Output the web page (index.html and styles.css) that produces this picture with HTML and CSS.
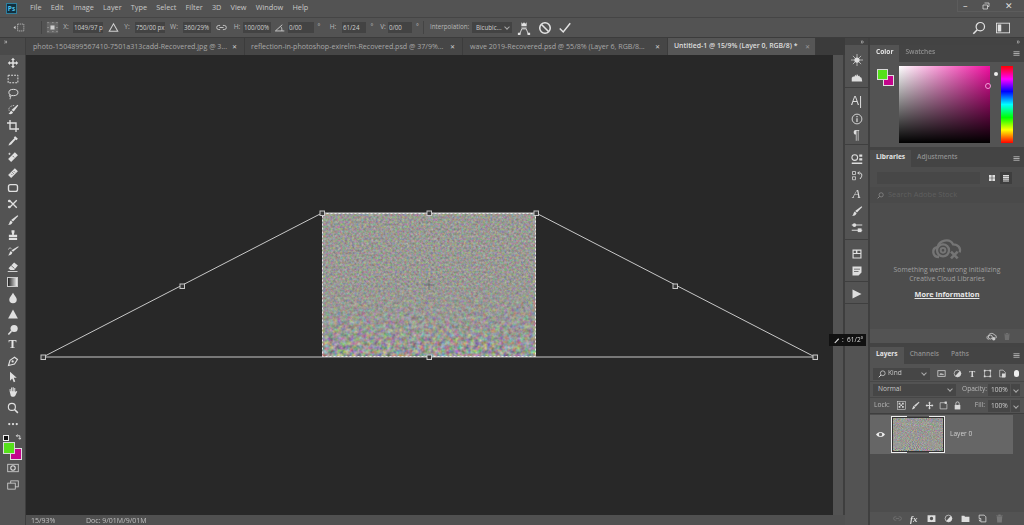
FILE: index.html
```html
<!DOCTYPE html>
<html lang="en">
<head>
<meta charset="utf-8">
<title>Photoshop</title>
<link rel="stylesheet" href="styles.css">
</head>
<body>
<svg class="defs" aria-hidden="true">
  <symbol id="move" viewBox="0 0 16 16"><path d="M8 1l2.600 3H9v3h3V5.400L15 8l-3 2.600V9H9v3h1.600L8 15l-2.600-3H7V9H4v1.600L1 8l3-2.600V7h3V4H5.400z"/></symbol>
  <symbol id="marquee" viewBox="0 0 16 16"><rect x="1.500" y="3" width="13" height="10" fill="none" stroke="currentColor" stroke-width="1.300" stroke-dasharray="2.500 1.500"/></symbol>
  <symbol id="lasso" viewBox="0 0 16 16"><ellipse cx="8.500" cy="6" rx="6" ry="4.200" fill="none" stroke="currentColor" stroke-width="1.300"/><path d="M4 9c-2 2 0 3 1 2s-1 2-1 4" fill="none" stroke="currentColor" stroke-width="1.200"/></symbol>
  <symbol id="quick" viewBox="0 0 16 16"><path d="M14 1l1 1-6 8-3-2z"/><path d="M5.500 9l2.500 2c-1 3-4 3-6 2 2-1 2-3 3.500-4z"/><path d="M3 9C1 5 5 2 10 2" fill="none" stroke="currentColor" stroke-dasharray="1.500 1"/></symbol>
  <symbol id="crop" viewBox="0 0 16 16"><path d="M4 0v12h12M0 4h12v12" fill="none" stroke="currentColor" stroke-width="1.800"/></symbol>
  <symbol id="dropper" viewBox="0 0 16 16"><path d="M11 1.500l3.500 3.500-2 2-1-1-6 6.500-3 1.500-.5-.5 1.500-3L10 4l-1-1z"/></symbol>
  <symbol id="heal" viewBox="0 0 16 16"><path d="M10.500 1.500l4 4-9 9-4-4z"/><path d="M7.500 6.500l2 2" stroke="#535353"/><path d="M1.800 3.800h3M3.300 2.300v3" stroke="currentColor"/></symbol>
  <symbol id="band" viewBox="0 0 16 16"><path d="M10.500 1.500l4 4-9 9-4-4z"/><path d="M7 7l2 2M9 5.500l1.500 1.500M5.500 9l1.500 1.500" stroke="#535353"/></symbol>
  <symbol id="patch" viewBox="0 0 16 16"><rect x="2" y="3.500" width="12" height="9" rx="2.500" fill="none" stroke="currentColor" stroke-width="1.800"/></symbol>
  <symbol id="scis" viewBox="0 0 16 16"><path d="M3 3l10 10M13 3L3 13" stroke="currentColor" stroke-width="1.800"/><circle cx="3" cy="4" r="1.800"/><circle cx="3" cy="12" r="1.800"/></symbol>
  <symbol id="brush" viewBox="0 0 16 16"><path d="M14 1.500l1 1-7 7.500-2.500-2z"/><path d="M5 8.500l2.500 2.500c-1 3-3.500 3.500-6 3.500 2-1.500 1.500-4.500 3.500-6z"/></symbol>
  <symbol id="stamp" viewBox="0 0 16 16"><path d="M6 1.500h4v2.500l-1 3.500h4.500V11h-11V7.500H7L6 4zM2.500 12h11v2.500h-11z"/></symbol>
  <symbol id="hist" viewBox="0 0 16 16"><path d="M15 1.500l.5 1-7.500 6.500-2-2z"/><path d="M5 8l2.200 2c-1 3-3 4-5.700 4 1.800-1.500 1.500-4 3.500-6z"/><path d="M2 6c1-3 3-2 4-1" fill="none" stroke="currentColor"/></symbol>
  <symbol id="eraser" viewBox="0 0 16 16"><path d="M9.500 2l5 4-5 6H4.500L2 9.500z"/><path d="M1 14h13" stroke="currentColor" stroke-width="1.200"/><path d="M5.500 6l4.500 4" stroke="#535353"/></symbol>
  <symbol id="drop" viewBox="0 0 16 16"><path d="M8 1c2 4 5 6 5 9a5 5 0 0 1-10 0c0-3 3-5 5-9z"/></symbol>
  <symbol id="tri" viewBox="0 0 16 16"><path d="M8 2l6.500 12h-13z"/></symbol>
  <symbol id="dodge" viewBox="0 0 16 16"><circle cx="9.500" cy="6" r="4.800"/><path d="M6 9.500L1.800 14" stroke="currentColor" stroke-width="2"/></symbol>
  <symbol id="pen" viewBox="0 0 16 16"><path d="M2 14l2-7 6-4 4 3-4 6z" fill="none" stroke="currentColor" stroke-width="1.500"/><circle cx="7.500" cy="8.500" r="1.500"/></symbol>
  <symbol id="arrow" viewBox="0 0 16 16"><path d="M4 1l9 8H9l2 5-2 1-2-5-3 3z"/></symbol>
  <symbol id="hand" viewBox="0 0 16 16"><path d="M3.500 7V4h1.300v3h.7V2h1.300v5h.7V1.500H9V7h.7V2.500H11V8l1.500-1.500 1.200.8L11 13c-1 1.800-5 2-6 0z"/></symbol>
  <symbol id="zoom" viewBox="0 0 16 16"><circle cx="6.500" cy="6.500" r="4.700" fill="none" stroke="currentColor" stroke-width="1.500"/><path d="M10 10l4.500 4.500" stroke="currentColor" stroke-width="2"/></symbol>
  <symbol id="dots" viewBox="0 0 16 16"><circle cx="3" cy="8" r="1.500"/><circle cx="8" cy="8" r="1.500"/><circle cx="13" cy="8" r="1.500"/></symbol>
  <symbol id="mask" viewBox="0 0 16 16"><rect x="1" y="3" width="14" height="10" fill="none" stroke="currentColor"/><circle cx="8" cy="8" r="3" fill="none" stroke="currentColor" stroke-width="1.400"/></symbol>
  <symbol id="screen" viewBox="0 0 16 16"><rect x="5" y="2.500" width="10" height="8" fill="none" stroke="currentColor"/><rect x="1" y="5.500" width="10" height="8" fill="#535353" stroke="currentColor"/></symbol>
  <symbol id="nav" viewBox="0 0 16 16"><circle cx="8" cy="8" r="3.500"/><path d="M8 0v16M0 8h16M2.500 2.500l11 11M13.500 2.500l-11 11" stroke="currentColor" stroke-width=".9"/></symbol>
  <symbol id="histo" viewBox="0 0 16 16"><path d="M1 14V9l2-2 1 1 2-3 1 2 1-3 2 3 1-1 1 2 2 1 1 5z"/></symbol>
  <symbol id="info" viewBox="0 0 16 16"><circle cx="8" cy="8" r="6.500" fill="none" stroke="currentColor" stroke-width="1.200"/><path d="M8 7v5M8 4v1.600" stroke="currentColor" stroke-width="1.600"/></symbol>
  <symbol id="group" viewBox="0 0 16 16"><circle cx="5" cy="6" r="3.800" fill="none" stroke="currentColor" stroke-width="1.400"/><path d="M11 2h4v3h-4zM11 7h4v3h-4zM1 12.500h14v2H1z"/></symbol>
  <symbol id="swap" viewBox="0 0 16 16"><path d="M2 2h4v4H2zM2 9h4v4H2z" fill="none" stroke="currentColor"/><path d="M9 4h3c2 0 3 2 2 5l-2 3M11 2L9 4l2 2" fill="none" stroke="currentColor" stroke-width="1.300"/></symbol>
  <symbol id="sliders" viewBox="0 0 16 16"><path d="M1 4h14M1 11h14" stroke="currentColor" stroke-width="1.300"/><circle cx="4.500" cy="4" r="2.500"/><rect x="9" y="8.500" width="5" height="5"/></symbol>
  <symbol id="panel1" viewBox="0 0 16 16"><path fill-rule="evenodd" d="M2 2h12v12H2zM3.500 8v4.500h9V8zM3.500 3.500V6.500h3v-3zM8.500 3.500V6.500h4v-3z"/></symbol>
  <symbol id="panel2" viewBox="0 0 16 16"><path fill-rule="evenodd" d="M2 2h12v8l-4 4H2zM4 5v1h8V5zM4 8v1h6V8z"/></symbol>
  <symbol id="play" viewBox="0 0 16 16"><path d="M2 2l12 6-12 6z"/></symbol>
  <symbol id="check" viewBox="0 0 16 16"><path d="M2 8.500l4 4 8-10" fill="none" stroke="currentColor" stroke-width="1.700"/></symbol>
  <symbol id="cancel" viewBox="0 0 16 16"><circle cx="8" cy="8" r="6" fill="none" stroke="currentColor" stroke-width="1.800"/><path d="M4 4l8 8" stroke="currentColor" stroke-width="1.800"/></symbol>
  <symbol id="warp" viewBox="0 0 16 16"><path d="M5 1.500l1.500 1.500L8 1.500 9.500 3 11 1.500V6H5z"/><path d="M5 8h6M3 15l2.500-6h5L13 15" fill="none" stroke="currentColor"/><path d="M1 13.500h3v2.500H1zM12 13.500h3v2.500h-3z"/></symbol>
  <symbol id="search" viewBox="0 0 16 16"><circle cx="9.500" cy="6.500" r="4.800" fill="none" stroke="currentColor" stroke-width="1.400"/><path d="M6 10l-4.500 4.500" stroke="currentColor" stroke-width="1.800"/></symbol>
  <symbol id="winicon" viewBox="0 0 16 16"><rect x=".5" y="2.500" width="15" height="11" fill="none" stroke="currentColor"/><path d="M2 4h4v8H2z"/></symbol>
  <symbol id="delta" viewBox="0 0 16 16"><path d="M8 2.500l6.200 11H1.800z" fill="none" stroke="currentColor" stroke-width="1.500"/></symbol>
  <symbol id="angle" viewBox="0 0 16 16"><path d="M15 13H2l10-9M10 7c1.500 1.500 1.500 4 1.500 6" fill="none" stroke="currentColor" stroke-width="1.300"/></symbol>
  <symbol id="link" viewBox="0 0 16 16"><path d="M6 5H4a3 3 0 0 0 0 6h2M10 5h2a3 3 0 0 1 0 6h-2M5 8h6" fill="none" stroke="currentColor" stroke-width="1.300"/></symbol>
  <symbol id="refpt" viewBox="0 0 16 16"><rect x="1" y="1" width="14" height="14" fill="#666"/><path d="M2 2h1M8 2h1M13 2h1M2 8h1M13 8h1M2 13h1M8 13h1M13 13h1" stroke="currentColor"/><rect x="5.500" y="5.500" width="5" height="5"/></symbol>
  <symbol id="transform" viewBox="0 0 16 16"><rect x="6" y="3" width="9" height="10" fill="none" stroke="currentColor" stroke-dasharray="2 1"/><path d="M0 8l3-2.500v5z"/></symbol>
  <symbol id="grid" viewBox="0 0 16 16"><path d="M2 2h5.300v5.300H2zM8.700 2H14v5.300H8.700zM2 8.700h5.300V14H2zM8.700 8.700H14V14H8.700z"/></symbol>
  <symbol id="list" viewBox="0 0 16 16"><path d="M2 2h12v2.400H2zM2 5.600h12V8H2zM2 9.200h12v2.400H2zM2 12.800h12V15H2z"/></symbol>
  <symbol id="menu" viewBox="0 0 16 16"><path d="M1 3h14v2H1zM1 7h14v2H1zM1 11h14v2H1z"/></symbol>
  <symbol id="trash" viewBox="0 0 16 16"><path d="M3 4h10l-1 11H4zM2 2.500h12V3.500H2zM6 1h4v1.500H6z"/></symbol>
  <symbol id="cloud" viewBox="0 0 48 32"><path d="M12 28C2 28 0 15 10 13 12 3 28-1 33 9c8 0 12 6 10 12" fill="none" stroke="currentColor" stroke-width="3.500"/><circle cx="18" cy="18" r="9" fill="none" stroke="currentColor" stroke-width="3.500"/><circle cx="18" cy="18" r="3.500" fill="none" stroke="currentColor" stroke-width="3"/><path d="M30 20l10 10M40 20L30 30" stroke="currentColor" stroke-width="4"/></symbol>
  <symbol id="cc" viewBox="0 0 18 16"><path d="M4 13C0 13 0 7 4 6c1-4 8-5 10-1 3 0 4 3 3 6" fill="none" stroke="currentColor" stroke-width="1.600"/><circle cx="7" cy="9" r="3.500" fill="none" stroke="currentColor" stroke-width="1.600"/><circle cx="13" cy="12" r="3"/></symbol>
  <symbol id="eye" viewBox="0 0 16 16"><path fill-rule="evenodd" d="M0 8c4-6 12-6 16 0-4 6-12 6-16 0zm8-3a3 3 0 1 0 0 6 3 3 0 0 0 0-6z"/></symbol>
  <symbol id="fimg" viewBox="0 0 16 16"><rect x="1.500" y="3" width="13" height="10" fill="none" stroke="currentColor" stroke-width="1.400"/><path d="M4 10l3-3 2 2 1.500-1 2 2z"/></symbol>
  <symbol id="half" viewBox="0 0 16 16"><circle cx="8" cy="8" r="6" fill="none" stroke="currentColor" stroke-width="1.200"/><path d="M12 3.500A6 6 0 0 1 4 12.500z"/></symbol>
  <symbol id="fshape" viewBox="0 0 16 16"><rect x="3" y="3" width="10" height="10" fill="none" stroke="currentColor" stroke-width="1.200"/><path d="M1.500 1.500h3v3h-3zM11.500 1.500h3v3h-3zM1.500 11.500h3v3h-3zM11.500 11.500h3v3h-3z"/></symbol>
  <symbol id="fsmart" viewBox="0 0 16 16"><path d="M3 2h6l4 4v8H3z" fill="none" stroke="currentColor" stroke-width="1.200"/><path d="M7 8h6v7H7z"/></symbol>
  <symbol id="checker" viewBox="0 0 16 16"><rect x="1" y="1" width="14" height="14" fill="none" stroke="currentColor"/><path d="M3 3h3v3H3zM9 3h3v3H9zM6 6h3v3H6zM3 9h3v3H3zM9 9h3v3H9z"/></symbol>
  <symbol id="lockpos" viewBox="0 0 16 16"><path d="M8 1l2.500 3H9v3h3V5.500L15 8l-3 2.500V9H9v3h1.500L8 15l-2.500-3H7V9H4v1.500L1 8l3-2.500V7h3V4H5.500z"/></symbol>
  <symbol id="lockart" viewBox="0 0 16 16"><path d="M2 3h9l3 3v8H2z" fill="none" stroke="currentColor" stroke-width="1.200"/><path d="M10 1h4v4h-4z"/></symbol>
  <symbol id="lock" viewBox="0 0 16 16"><path d="M3 7h10v8H3z"/><path d="M5 7V4.500a3 3 0 0 1 6 0V7" fill="none" stroke="currentColor" stroke-width="1.500"/></symbol>
  <symbol id="chain" viewBox="0 0 16 16"><path d="M6 5H4a3 3 0 0 0 0 6h2M10 5h2a3 3 0 0 1 0 6h-2M5 8h6" fill="none" stroke="currentColor" stroke-width="1.300"/></symbol>
  <symbol id="maskb" viewBox="0 0 16 16"><path fill-rule="evenodd" d="M1 2h14v12H1zM8 5a3 3 0 1 0 0 6 3 3 0 0 0 0-6z"/></symbol>
  <symbol id="folder" viewBox="0 0 16 16"><path d="M1 3h5l1 2h8v9H1z"/></symbol>
  <symbol id="newl" viewBox="0 0 16 16"><path d="M2 2h9l3 3v9H5V8H2z" fill="none" stroke="currentColor" stroke-width="1.400"/><path d="M1 10h3v4"/></symbol>
</svg>

<div class="app">
  <header class="menubar">
    <div class="logo">Ps</div>
    <nav class="menus">
      <span>File</span><span>Edit</span><span>Image</span><span>Layer</span><span>Type</span><span>Select</span><span>Filter</span><span>3D</span><span>View</span><span>Window</span><span>Help</span>
    </nav>
    <div class="winctl">
      <span class="winbtn">–</span>
      <svg class="winbtn-ic" viewBox="0 0 16 16"><path d="M5 2h9v7h-3M2 6h9v8H2z" fill="none" stroke="currentColor" stroke-width="1.500"/></svg>
      <span class="winbtn close">✕</span>
    </div>
  </header>

  <div class="options">
    <svg class="ic opt-tool"><use href="#transform"/></svg>
    <i class="vsep opt-sep1"></i>
    <svg class="ic opt-ref"><use href="#refpt"/></svg>
    <span class="lb w14">X:</span><span class="fld w30">1049/97 p</span>
    <svg class="ic opt-delta"><use href="#delta"/></svg>
    <span class="lb w16">Y:</span><span class="fld w30">750/00 px</span>
    <span class="lb w18">W:</span><span class="fld w28">360/29%</span>
    <span class="icbox w20"><svg class="ic"><use href="#link"/></svg></span>
    <span class="lb w12">H:</span><span class="fld w28">100/00%</span>
    <span class="icbox w17"><svg class="ic"><use href="#angle"/></svg></span>
    <span class="fld w26">0/00</span>
    <span class="lb w10">°</span>
    <span class="lb w18">H:</span><span class="fld w24">61/24</span>
    <span class="lb w12">°</span>
    <span class="lb w10">V:</span><span class="fld w24">0/00</span>
    <span class="lb w11">°</span>
    <i class="vsep"></i>
    <span class="lb interp">Interpolation:</span>
    <span class="fld sel w40">Bicubic...<b class="chev"></b></span>
    <svg class="ic big opt-warp"><use href="#warp"/></svg>
    <svg class="ic big opt-cancel"><use href="#cancel"/></svg>
    <svg class="ic big opt-check"><use href="#check"/></svg>
    <svg class="ic big opt-search"><use href="#search"/></svg>
    <svg class="ic big opt-win"><use href="#winicon"/></svg>
  </div>

  <div class="main">
    <aside class="tools">
      <div class="strip">»</div>
      <div class="toollist">
        <svg class="tool"><use href="#move"/></svg>
        <svg class="tool"><use href="#marquee"/></svg>
        <svg class="tool"><use href="#lasso"/></svg>
        <svg class="tool"><use href="#quick"/></svg>
        <svg class="tool"><use href="#crop"/></svg>
        <svg class="tool"><use href="#dropper"/></svg>
        <svg class="tool"><use href="#heal"/></svg>
        <svg class="tool"><use href="#band"/></svg>
        <svg class="tool"><use href="#patch"/></svg>
        <svg class="tool"><use href="#scis"/></svg>
        <svg class="tool"><use href="#brush"/></svg>
        <svg class="tool"><use href="#stamp"/></svg>
        <svg class="tool"><use href="#hist"/></svg>
        <svg class="tool"><use href="#eraser"/></svg>
        <div class="grad"></div>
        <svg class="tool"><use href="#drop"/></svg>
        <svg class="tool"><use href="#tri"/></svg>
        <svg class="tool"><use href="#dodge"/></svg>
        <div class="tooltext">T</div>
        <svg class="tool"><use href="#pen"/></svg>
        <svg class="tool"><use href="#arrow"/></svg>
        <svg class="tool"><use href="#hand"/></svg>
        <svg class="tool"><use href="#zoom"/></svg>
        <svg class="tool"><use href="#dots"/></svg>
      </div>
      <div class="minicolors"><i class="mini-d"></i><svg class="mini-s" viewBox="0 0 16 16"><path d="M3 4h8v8M3 4l3-3M3 4l3 3M11 12l3-3M11 12l-3-3" fill="none" stroke="currentColor" stroke-width="2"/></svg></div>
      <div class="swatches tb"><i class="bgc"></i><i class="fgc"></i></div>
      <svg class="tool low"><use href="#mask"/></svg>
      <svg class="tool low"><use href="#screen"/></svg>
    </aside>

    <section class="work">
      <div class="tabs">
        <div class="tab t1"><span class="tabname">photo-1504899567410-7501a313cadd-Recovered.jpg @ 3...</span><b>✕</b></div>
        <div class="tab t2"><span class="tabname">reflection-in-photoshop-exirelm-Recovered.psd @ 37/9%...</span><b>✕</b></div>
        <div class="tab t3"><span class="tabname">wave  2019-Recovered.psd @ 55/8% (Layer 6, RGB/8...</span><b>✕</b></div>
        <div class="tab t4 on"><span class="tabname">Untitled-1 @ 15/9% (Layer 0, RGB/8) *</span><b>✕</b></div>
      </div>
      <div class="canvasrow">
        <svg class="canvas" viewBox="26 55 807 460">
          <defs>
            <filter id="nA" x="0" y="0" width="100%" height="100%" color-interpolation-filters="sRGB">
              <feTurbulence type="fractalNoise" baseFrequency=".42" numOctaves="2" seed="4"/>
              <feColorMatrix values=".42 0 0 0 .39  0 .42 0 0 .39  0 0 .42 0 .37  0 0 0 0 1"/>
            </filter>
            <filter id="nB" x="0" y="0" width="100%" height="100%" color-interpolation-filters="sRGB">
              <feTurbulence type="fractalNoise" baseFrequency=".24" numOctaves="2" seed="9"/>
              <feColorMatrix values=".85 0 0 0 .17  0 .85 0 0 .17  0 0 .85 0 .16  0 0 0 0 1"/>
            </filter>
            <linearGradient id="fadeG" x1="0" y1="0" x2="0" y2="1">
              <stop offset=".45" stop-color="#000"/><stop offset="1" stop-color="#ddd"/>
            </linearGradient>
            <mask id="fade"><rect x="322" y="213" width="214" height="144" fill="url(#fadeG)"/></mask>
          </defs>
          <rect class="noise-a" x="322" y="213" width="214" height="144"/>
          <rect class="noise-b" x="322" y="213" width="214" height="144"/>
          <path class="cross" d="M424 285h10M429 280v10"/>
          <path class="outline" d="M322 213H536L815 357H43Z"/>
          <rect class="ants" x="322.500" y="213.500" width="213" height="143"/>
          <g class="handles">
            <rect x="320" y="211" width="4.500" height="4.500"/><rect x="427" y="211" width="4.500" height="4.500"/><rect x="534" y="211" width="4.500" height="4.500"/>
            <rect x="180" y="284" width="4.500" height="4.500"/><rect x="673" y="284" width="4.500" height="4.500"/>
            <rect x="41" y="355" width="4.500" height="4.500"/><rect x="427" y="355" width="4.500" height="4.500"/><rect x="813" y="355" width="4.500" height="4.500"/>
          </g>
        </svg>
        <div class="vscroll"></div>
      </div>
      <footer class="status"><span class="zoomval">15/93%</span><span>Doc: 9/01M/9/01M</span></footer>
    </section>

    <aside class="dock">
      <div class="strip right">»</div>
      <div class="dgroup g1"><svg class="dic"><use href="#nav"/></svg><svg class="dic"><use href="#histo"/></svg></div>
      <div class="dgroup g2"><span class="dtxt">A|</span><svg class="dic"><use href="#info"/></svg><span class="dtxt">¶</span></div>
      <div class="dgroup g3"><svg class="dic"><use href="#group"/></svg><svg class="dic"><use href="#swap"/></svg><span class="dtxt ital">A</span><svg class="dic"><use href="#brush"/></svg><svg class="dic"><use href="#sliders"/></svg></div>
      <div class="dgroup g4"><svg class="dic"><use href="#panel1"/></svg><svg class="dic"><use href="#panel2"/></svg></div>
      <div class="dgroup g5"><svg class="dic"><use href="#play"/></svg></div>
    </aside>

    <aside class="panels">
      <div class="strip right">»</div>
      <section class="panel color">
        <div class="ptabs"><span class="ptab on">Color</span><span class="ptab">Swatches</span><svg class="pmenu"><use href="#menu"/></svg></div>
        <div class="colorbody">
          <div class="swatches cp"><i class="bgc"></i><i class="fgc"></i></div>
          <div class="picker"><i class="ring"></i></div>
          <i class="dot"></i>
          <div class="hue"></div>
        </div>
      </section>
      <section class="panel libs">
        <div class="ptabs"><span class="ptab on">Libraries</span><span class="ptab">Adjustments</span><svg class="pmenu"><use href="#menu"/></svg></div>
        <div class="librow"><span class="libsel"></span><svg class="libic"><use href="#grid"/></svg><span class="libon"><svg class="libic"><use href="#list"/></svg></span></div>
        <div class="libsearch"><svg class="sic"><use href="#search"/></svg><span>Search Adobe Stock</span></div>
        <div class="libmsg">
          <svg class="cloud"><use href="#cloud"/></svg>
          <p>Something went wrong initializing<br>Creative Cloud Libraries</p>
          <a>More information</a>
        </div>
        <div class="libfoot"><svg class="ccic"><use href="#cc"/></svg><svg class="trash"><use href="#trash"/></svg></div>
      </section>
      <section class="panel layers">
        <div class="ptabs"><span class="ptab on">Layers</span><span class="ptab">Channels</span><span class="ptab">Paths</span><svg class="pmenu"><use href="#menu"/></svg></div>
        <div class="lrow first">
          <span class="lsel kind"><svg class="sic2"><use href="#search"/></svg>Kind<b class="chev"></b></span>
          <svg class="fic"><use href="#fimg"/></svg><svg class="fic"><use href="#half"/></svg><span class="ftxt">T</span><svg class="fic"><use href="#fshape"/></svg><svg class="fic"><use href="#fsmart"/></svg><i class="ftoggle"></i>
        </div>
        <div class="lrow">
          <span class="lsel blend">Normal<b class="chev"></b></span>
          <span class="llab">Opacity:</span><span class="lval">100%</span><span class="lchev"><b class="chev"></b></span>
        </div>
        <div class="lrow lockrow">
          <span class="llab locklab">Lock:</span>
          <svg class="fic"><use href="#checker"/></svg><svg class="fic"><use href="#brush"/></svg><svg class="fic"><use href="#lockpos"/></svg><svg class="fic"><use href="#lockart"/></svg><svg class="fic"><use href="#lock"/></svg>
          <span class="llab filllab">Fill:</span><span class="lval">100%</span><span class="lchev"><b class="chev"></b></span>
        </div>
        <div class="layerlist">
          <div class="layer">
            <svg class="eye"><use href="#eye"/></svg>
            <div class="thumbbox">
              <svg class="thumb" viewBox="322 213 214 144" preserveAspectRatio="none">
                <rect class="noise-a" x="322" y="213" width="214" height="144"/>
                <rect class="noise-b" x="322" y="213" width="214" height="144"/>
              </svg>
            </div>
            <span class="lname">Layer 0</span>
          </div>
        </div>
        <div class="lfoot">
          <svg class="lf dim"><use href="#chain"/></svg>
          <span class="fx">fx</span>
          <svg class="lf"><use href="#maskb"/></svg>
          <svg class="lf"><use href="#half"/></svg>
          <svg class="lf"><use href="#folder"/></svg>
          <svg class="lf"><use href="#newl"/></svg>
          <svg class="lf dim"><use href="#trash"/></svg>
        </div>
      </section>
    </aside>

    <div class="tooltip"><svg class="tt-ic" viewBox="0 0 16 16"><path d="M3 13L12 3l2 2-9 9z"/></svg> : &nbsp;61/2°</div>
  </div>
</div>
</body>
</html>
```
FILE: styles.css
```css
* { box-sizing: border-box; }
html, body { margin: 0; padding: 0; height: 100%; overflow: hidden; }
body { background: #535353; color: #c4c4c4; font: 8px/1 "Open Sans", "Liberation Sans", sans-serif; }
.defs { display: none; }
i, b { font-style: normal; font-weight: normal; }
svg { fill: currentColor; color: #dcdcdc; display: block; flex: none; }

.app { display: flex; flex-direction: column; width: 1024px; height: 525px; overflow: hidden; filter: blur(.35px); }

/* menu bar */
.menubar { display: flex; align-items: flex-start; height: 17px; background: #535353; }
.logo { width: 11px; height: 11px; margin: 3px 0 0 6px; background: #12303f; border: 1px solid #2f7f9e; color: #4fc0ea; font: bold 6.500px/9px "Open Sans", sans-serif; text-align: center; }
.menus { display: flex; gap: 9.200px; margin: 4px 0 0 13px; font-size: 7.300px; color: #c8c8c8; }
.winctl { display: flex; align-items: center; justify-content: space-between; margin-left: auto; width: 67px; height: 12px; padding: 0 11px 0 5px; border-left: 1px solid #5c5c5c; border-bottom: 1px solid #5c5c5c; }
.winbtn { font-size: 9px; color: #ddd; }
.winbtn-ic { width: 8px; height: 8px; }

/* options bar */
.options { display: flex; align-items: center; height: 21px; background: #535353; border-top: 1px solid #454545; border-bottom: 1px solid #3c3c3c; font-size: 6.600px; }
.ic { width: 11px; height: 11px; color: #cfcfcf; }
.ic.big { width: 14px; height: 14px; color: #e2e2e2; }
.opt-tool { margin-left: 13px; width: 12px; }
.vsep { width: 1px; height: 13px; background: #444; flex: none; }
.opt-sep1 { margin-left: 16px; }
.opt-ref { margin-left: 4px; width: 13px; height: 13px; }
.opt-delta { margin-left: 5px; }
.lb { flex: none; text-align: center; color: #b8b8b8; }
.fld { flex: none; height: 11px; line-height: 11px; padding-left: 1px; background: #434343; color: #cfcfcf; white-space: nowrap; font-size: 6.200px; }
.icbox { display: flex; justify-content: center; flex: none; }
.w10 { width: 10px; } .w11 { width: 11px; } .w12 { width: 12px; } .w14 { width: 14px; } .w16 { width: 16px; } .w17 { width: 17px; } .w18 { width: 18px; } .w20 { width: 20px; } .w24 { width: 24px; } .w26 { width: 26px; } .w28 { width: 28px; } .w30 { width: 30px; } .w40 { width: 40px; }
.interp { width: 42px; margin-left: 6px; text-align: left; white-space: nowrap; font-size: 6.200px; }
.sel { position: relative; padding-left: 4px; }
.chev { display: inline-block; width: 4px; height: 4px; border: solid #aaa; border-width: 0 1px 1px 0; transform: rotate(45deg); }
.sel .chev { position: absolute; right: 3px; top: 3px; }
.opt-warp { margin-left: 5px; }
.opt-cancel { margin-left: 7px; }
.opt-check { margin-left: 6px; }
.opt-search { margin-left: auto; width: 12px; height: 12px; }
.opt-win { margin: 0 14px 0 10px; width: 12px; height: 12px; }

/* main */
.main { position: relative; display: flex; flex: 1; min-height: 0; }
.strip { height: 17px; font-size: 7px; line-height: 7px; padding-left: 4px; color: #ccc; }
.strip.right { height: 7px; text-align: right; padding: 0 4px 0 0; background: #434343; }

.tools { width: 26px; flex: none; border-right: 1px solid #3e3e3e; background: #535353; display: flex; flex-direction: column; align-items: center; }
.tools .strip { width: 100%; background: #4a4a4a; }
.toollist { display: flex; flex-direction: column; align-items: center; }
.tool { width: 12px; height: 12px; margin: 1.850px 0; color: #e0e0e0; }
.grad { width: 11px; height: 10px; margin: 2.850px 0; border: 1px solid #ccc; background: linear-gradient(90deg, #222, #eee); }
.tooltext { height: 15.700px; font: bold 12px/15.700px "Liberation Serif", serif; color: #e6e6e6; }
.minicolors { display: flex; justify-content: space-between; align-items: center; width: 19px; height: 8px; margin-top: 2px; }
.mini-d { width: 6px; height: 6px; background: #111; border: 1px solid #eee; }
.mini-s { width: 7px; height: 7px; }
.swatches { position: relative; flex: none; }
.swatches.tb { width: 19px; height: 18px; margin-top: 0; }
.swatches .fgc, .swatches .bgc { position: absolute; display: block; }
.fgc { background: #55e01a; border: 1px solid #d8d8d8; }
.bgc { background: #c4058c; border: 1px solid #e0e0e0; }
.tb .fgc { left: 0; top: 0; width: 12px; height: 12px; }
.tb .bgc { left: 7px; top: 6px; width: 12px; height: 12px; }
.tool.low { margin: 2.800px 0 1px; }
.tool.low + .tool.low { margin-top: 4px; }

/* workspace */
.work { width: 819px; flex: none; display: flex; flex-direction: column; }
.tabs { display: flex; height: 17px; background: #3b3b3b; }
.tab { display: flex; align-items: center; justify-content: space-between; gap: 2px; height: 17px; padding: 0 7px; background: #464646; color: #a8a8a8; font-size: 7.100px; white-space: nowrap; border-right: 1px solid #3c3c3c; flex: none; }
.tab b { font-size: 6px; color: #d0d0d0; }
.t1 { width: 219px; } .t2 { width: 218px; padding-left: 6px; } .t3 { width: 205px; padding-left: 7px; }
.t4 { width: 148px; padding: 0 5px 0 6px; }
.tab.on { background: #565656; color: #dedede; font-weight: 600; font-size: 6.900px; }
.tab.on b { color: #999; }
.tabname { display: block; }

.canvasrow { display: flex; height: 460px; }
.canvas { width: 807px; height: 460px; background: #282828; flex: none; }
.vscroll { width: 12px; background: #535353; border-right: 2px solid #3e3e3e; }
.noise-a { filter: url(#nA); }
.noise-b { filter: url(#nB); mask: url(#fade); }
.cross { stroke: #666; fill: none; stroke-width: .8; }
.outline { fill: none; stroke: #c8c8c8; stroke-width: 1; }
.ants { fill: none; stroke: #e8e8e8; stroke-width: 1; stroke-dasharray: 2 2; }
.handles rect { fill: #3a3a3a; stroke: #c8c8c8; stroke-width: 1; }
.status { display: flex; align-items: center; gap: 30px; height: 10px; padding-left: 5px; background: #505050; font-size: 7px; color: #c0c0c0; }
.zoomval { width: 25px; }

/* dock */
.dock { width: 25px; flex: none; background: #535353; border-right: 2px solid #3f3f3f; display: flex; flex-direction: column; }
.dgroup { display: flex; flex-direction: column; align-items: center; border-bottom: 1px solid #3f3f3f; }
.dic { width: 12px; height: 12px; margin: 2.500px 0; color: #dedede; }
.dtxt { height: 17px; font: 12px/17px "Liberation Sans", sans-serif; color: #dedede; }
.dtxt.ital { font: italic 13px/17px "Liberation Serif", serif; }
.g1 { padding-top: 6px; height: 43px; gap: 0; justify-content: flex-start; }
.g1 .dic + .dic { margin-top: 3px; }
.g2 { height: 57px; padding-top: 5px; }
.g3 { height: 95px; padding-top: 5px; gap: 0; }
.g3 .dic { margin-bottom: 3px; }
.g4 { height: 42px; padding-top: 5px; }
.g4 .dic + .dic { margin-top: 3px; }
.g5 { height: 22px; padding-top: 3px; }

/* panels */
.panels { width: 154px; flex: none; display: flex; flex-direction: column; background: #434343; }
.panel { background: #535353; display: flex; flex-direction: column; }
.ptabs { display: flex; align-items: stretch; height: 17px; background: #444; font-size: 6.600px; flex: none; }
.ptab { padding: 4px 6px 0; color: #8f8f8f; font-weight: 600; white-space: nowrap; }
.ptab.on { background: #535353; color: #e4e4e4; font-weight: 700; }
.pmenu { width: 7px; height: 7px; margin: 5px 4px 0 auto; color: #aaa; }

.color { height: 102px; margin-bottom: 3px; }
.colorbody { position: relative; flex: 1; }
.swatches.cp { position: absolute; left: 7px; top: 7px; width: 18px; height: 17px; }
.cp .fgc { left: 0; top: 0; width: 11px; height: 11px; }
.cp .bgc { left: 6px; top: 6px; width: 11px; height: 11px; }
.picker { position: absolute; left: 29px; top: 4px; width: 91px; height: 77px; background: linear-gradient(0deg, #000, rgba(0,0,0,0)), linear-gradient(90deg, #fff, #f010a0); }
.ring { position: absolute; right: -1px; top: 17px; width: 6px; height: 6px; border: 1px solid #f0a0d8; border-radius: 50%; }
.dot { position: absolute; left: 124px; top: 10px; width: 4px; height: 4px; border-radius: 50%; background: #eee; }
.hue { position: absolute; left: 131px; top: 4px; width: 12px; height: 77px; background: linear-gradient(180deg, #f00 0%, #f0f 17%, #00f 33%, #0ff 50%, #0f0 67%, #ff0 83%, #f00 100%); }

.libs { height: 193px; margin-bottom: 4px; background: #4d4d4d; }
.libs .ptabs { background: #444; }
.libs .ptab.on { background: #4d4d4d; }
.librow { display: flex; align-items: center; height: 17px; padding: 4px 0 0 7px; flex: none; }
.libsel { width: 103px; height: 12px; background: #474747; margin-right: 8px; }
.libic { width: 8px; height: 8px; color: #ddd; }
.libon { display: flex; align-items: center; justify-content: center; width: 12px; height: 12px; margin-left: 4px; background: #3e3e3e; }
.libsearch { display: flex; align-items: center; gap: 4px; height: 16px; margin-top: 3px; padding-left: 7px; background: #4a4a4a; color: #5f5f5f; font-size: 7.500px; flex: none; }
.sic { width: 7px; height: 7px; color: #999; }
.libmsg { flex: 1; display: flex; flex-direction: column; align-items: center; color: #a0a0a0; font-size: 6.800px; text-align: center; }
.cloud { width: 32px; height: 22px; margin-top: 35px; color: #757575; }
.libmsg p { margin: 5px 0 0; line-height: 9px; }
.libmsg a { margin-top: 8px; color: #e6e6e6; font-weight: 700; text-decoration: underline; font-size: 7.300px; }
.libfoot { display: flex; align-items: center; justify-content: flex-end; gap: 6px; height: 14px; padding-right: 13px; background: #535353; flex: none; }
.ccic { width: 11px; height: 9px; color: #ccc; }
.trash { width: 8px; height: 9px; color: #6f6f6f; }

.layers { flex: 1; min-height: 0; }
.lrow { display: flex; align-items: center; height: 16px; padding: 0 4px 0 3px; border-bottom: 1px solid #474747; color: #b8b8b8; font-size: 6.600px; flex: none; }
.lrow.first { margin-top: 2px; }
.lsel { position: relative; display: flex; align-items: center; height: 12px; padding-left: 5px; background: #464646; color: #c8c8c8; }
.lsel .chev { position: absolute; right: 4px; top: 3px; }
.kind { width: 57px; margin-right: 4px; gap: 2px; }
.sic2 { width: 8px; height: 8px; }
.fic { width: 9px; height: 9px; margin: 0 3.200px; color: #d8d8d8; }
.ftxt { width: 15px; text-align: center; font: bold 9px "Liberation Serif", serif; color: #ddd; }
.ftoggle { width: 5px; height: 7px; margin-left: 3px; background: #eee; border-radius: 3px; }
.blend { width: 83px; }
.llab { margin-left: 6px; white-space: nowrap; }
.lval { margin-left: auto; width: 22px; height: 12px; line-height: 12px; padding-left: 3px; background: #464646; color: #ccc; }
.lchev { display: flex; align-items: center; justify-content: center; width: 9px; height: 12px; background: #464646; margin-left: 1px; }
.lockrow { border-bottom: 1px solid #3e3e3e; }
.locklab { margin-left: 1px; margin-right: 5px; }
.lockrow .fic { margin: 0 2.500px; }
.filllab { margin-left: auto; }
.filllab + .lval { margin-left: 3px; }
.layerlist { flex: 1; min-height: 0; background: #4d4d4d; padding: 1px 11px 0 0; }
.layer { display: flex; align-items: center; height: 39px; background: #666; }
.eye { width: 9px; height: 9px; margin: 0 6px; color: #ececec; }
.thumbbox { position: relative; width: 54px; height: 37px; border: 1px solid #eee; }
.thumbbox::after { content: ""; position: absolute; left: 15px; right: 15px; top: -1px; bottom: -1px; border: solid #555; border-width: 1px 0; }
.thumb { width: 52px; height: 35px; border: 1px solid #333; }
.lname { margin-left: 5px; color: #cfcfcf; font-size: 6.600px; }
.lfoot { display: flex; align-items: center; justify-content: flex-start; height: 13px; padding-left: 23px; gap: 8px; background: #535353; flex: none; }
.lf { width: 9px; height: 9px; color: #ddd; }
.lf.dim { color: #777; }
.fx { width: 9px; font: italic bold 9px "Liberation Serif", serif; color: #ddd; }

/* transform tooltip */
.tooltip { position: absolute; left: 829px; top: 296px; display: flex; align-items: center; gap: 2px; width: 37px; height: 12px; padding-left: 4px; background: #111; color: #ddd; font-size: 6.500px; white-space: nowrap; }
.tt-ic { width: 7px; height: 7px; color: #ddd; }
```
